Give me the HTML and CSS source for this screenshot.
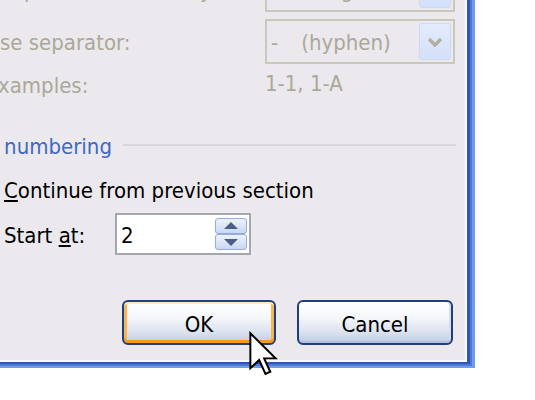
FILE: index.html
```html
<!DOCTYPE html>
<html lang="en">
<head>
<meta charset="utf-8">
<title>Page Number Format</title>
<link rel="stylesheet" href="styles.css">
</head>
<body>
<div class="dialog">
  <div class="chapter-grid">
    <span class="lbl disabled">Chapter starts with style:</span>
    <div class="combo">
      <span class="combo-text disabled">Heading 1</span>
      <span class="drop"><svg width="16" height="10" viewBox="0 0 16 10"><polyline points="2,2 8,8 14,2" fill="none" stroke="#b3afa3" stroke-width="3.4"/></svg></span>
    </div>
    <span class="lbl disabled">Use separator:</span>
    <div class="combo">
      <span class="combo-text disabled"><span class="sep-char">-</span>(hyphen)</span>
      <span class="drop"><svg width="16" height="10" viewBox="0 0 16 10"><polyline points="2,2 8,8 14,2" fill="none" stroke="#b3afa3" stroke-width="3.4"/></svg></span>
    </div>
    <span class="lbl disabled">Examples:</span>
    <span class="example disabled">1-1, 1-A</span>
  </div>

  <div class="group-head">
    <span class="group-title">Page numbering</span>
    <span class="group-line"></span>
  </div>

  <div class="radio-row first">
    <span class="radio"></span>
    <span><u>C</u>ontinue from previous section</span>
  </div>
  <div class="radio-row second">
    <span class="radio checked"></span>
    <span class="start-label">Start <u>a</u>t:</span>
    <div class="spin">
      <span class="spin-value">2</span>
      <span class="spin-btns">
        <span class="spin-btn"><svg width="14" height="8" viewBox="0 0 14 8"><polygon points="7,0 14,7 0,7" fill="#4b5e86"/></svg></span>
        <span class="spin-btn"><svg width="14" height="8" viewBox="0 0 14 8"><polygon points="0,1 14,1 7,8" fill="#4b5e86"/></svg></span>
      </span>
    </div>
  </div>

  <div class="buttons">
    <button class="btn btn-default">OK</button>
    <button class="btn btn-cancel">Cancel</button>
  </div>
</div>
<svg class="cursor" width="31" height="46" viewBox="0 0 14 21">
  <path d="M1,1 L1,17 L5,13.2 L7.9,19.6 L10.1,18.6 L7.3,12.5 L12.5,12.5 Z" fill="#fff" stroke="#000" stroke-width="0.9" stroke-linejoin="miter"/>
</svg>
</body>
</html>
```
FILE: styles.css
```css
html, body {
  margin: 0;
  padding: 0;
  background: #ffffff;
}
body {
  width: 535px;
  height: 400px;
  overflow: hidden;
  position: relative;
  font-family: "DejaVu Sans Condensed", "DejaVu Sans", sans-serif;
  font-size: 22px;
  line-height: 26px;
  color: #000;
}
.dialog {
  margin: -80px 0 0 -120px;
  width: 585px;
  height: 440px;
  box-sizing: border-box;
  padding: 47px 0 15px 70px;
  background: #ebe9ed;
  display: flex;
  flex-direction: column;
  box-shadow: 2px 2px 0 0 #fafafd, 5px 4px 0 0 #2f56b6, 7px 6px 0 0 #4a7adb, 10px 8px 0 0 #729beb;
}
.disabled { color: #aca899; }

.chapter-grid {
  display: grid;
  grid-template-columns: 279.5px 190px;
  grid-template-rows: 45px 45px 26px;
  row-gap: 7px;
  margin-left: 35.5px;
}
.lbl { align-self: center; white-space: nowrap; padding-top: 3px; }
.example { white-space: nowrap; }
.combo {
  box-sizing: border-box;
  border: 2px solid #cac7bb;
  padding: 2px;
  display: flex;
  align-items: center;
  justify-content: space-between;
}
.combo-text { padding-left: 2px; white-space: nowrap; padding-top: 2px; }
.sep-char { margin-right: 23px; }
.drop {
  width: 32px;
  height: 37px;
  box-sizing: border-box;
  border: 1px solid #cbdaf5;
  border-radius: 3px;
  background: linear-gradient(#e3ecfc, #d2e0f9);
  display: flex;
  align-items: center;
  justify-content: center;
}

.group-head {
  display: flex;
  align-items: center;
  margin-top: 37px;
}
.group-title { color: #3f69c3; white-space: nowrap; }
.group-line {
  flex: 1;
  height: 2px;
  background: #d8d6db;
  margin: -4px 9px 0 11px;
}

.radio-row { display: flex; align-items: center; white-space: nowrap; }
.radio-row.first { margin-top: 18px; }
.radio-row.second { margin-top: 9px; height: 42px; }
.radio {
  flex: none;
  width: 26px;
  height: 26px;
  box-sizing: border-box;
  border: 2px solid #1c5180;
  border-radius: 50%;
  background: #fff;
  margin-right: 28px;
}
.start-label { width: 111px; padding-top: 4px; }
.spin {
  width: 136px;
  height: 42px;
  box-sizing: border-box;
  border: 2px solid #a4a8ae;
  background: #fff;
  padding: 0 2px 0 4px;
  display: flex;
  align-items: center;
  justify-content: space-between;
}
.spin-value { padding-top: 4px; }
.spin-btns { display: flex; flex-direction: column; }
.spin-btn {
  width: 32px;
  height: 16px;
  box-sizing: border-box;
  border: 1px solid #93acd8;
  border-radius: 3px;
  background: linear-gradient(#edf3fd, #c9d8f3);
  display: flex;
  align-items: center;
  justify-content: center;
}

.buttons {
  display: flex;
  justify-content: flex-end;
  gap: 21px;
  margin-top: 45px;
  padding-right: 12px;
}
.btn {
  height: 45px;
  box-sizing: border-box;
  border: 2px solid #1f3f7b;
  border-radius: 6px;
  font-family: inherit;
  font-size: 22px;
  color: #000;
  padding: 3px 0 0 0;
  background: linear-gradient(#ffffff 0%, #f4f6fa 40%, #d9e1ee 75%, #bccbe2 100%);
}
.btn-default {
  width: 154px;
  box-shadow: inset 0 2px 0 #ffeac0, inset 0 -3px 0 #f49a1c, inset 3px 0 0 #f8b64d, inset -3px 0 0 #f8b64d;
}
.btn-cancel {
  width: 156px;
  box-shadow: inset 0 -2px 0 #b2c0d8, inset -2px 0 0 #d6deec;
}

.cursor {
  position: absolute;
  left: 248px;
  top: 331px;
}
```
